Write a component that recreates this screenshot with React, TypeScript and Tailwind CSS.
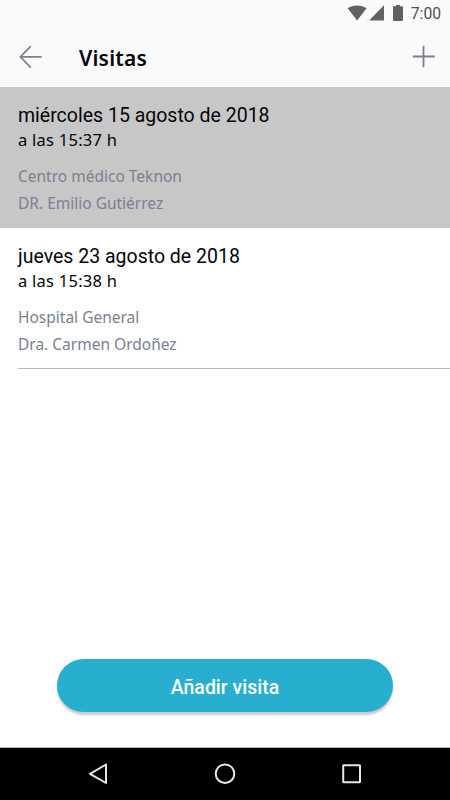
type Visit = {
  day: string;
  time: string;
  place: string;
  doctor: string;
};

function StatusBar() {
  return (
    <div className="flex h-[27px] items-start">
      <svg className="h-[27px] w-full" viewBox="0 0 450 27" fill="#616161">
        <path d="M347.6 8.3C353 4.5 361 4.5 366.6 8.3L357.1 20.5Z" />
        <path d="M384 5.2V20.6H369.2Z" />
        <path d="M396 5h4v1.2h2.4q.6 0 .6.7v13.2q0 .8-.8.8h-8.4q-.8 0-.8-.8V6.900q0-.7.6-.7H396Z" />
        <text x="410.800" y="19.300" fontSize="15.700" fontFamily="Roboto, sans-serif" fill="#505050">7:00</text>
      </svg>
    </div>
  );
}

function Header() {
  return (
    <header className="flex h-[60px] items-center bg-[#fafafa]">
      <svg className="ml-[19px] h-6 w-6" viewBox="0 0 24 24" fill="none" stroke="#7b8092" strokeWidth="1.700" strokeLinecap="round" strokeLinejoin="round">
        <path d="M22 11.900H1.300M11.400 1.600L1.300 11.900L11.400 22.200" />
      </svg>
      <h1 className="mt-[2px] ml-[36px] font-['Noto_Sans',sans-serif] text-[21px] leading-[30px] font-semibold tracking-[0.2px] text-[#05070c]">Visitas</h1>
      <svg className="mr-[14px] ml-auto h-6 w-6" viewBox="0 0 24 24" fill="none" stroke="#7b8092" strokeWidth="1.8">
        <path d="M.8 11.500H22.800M11.500 .7V22.300" />
      </svg>
    </header>
  );
}

function VisitText({ visit }: { visit: Visit }) {
  return (
    <>
      <p className="font-[Roboto,sans-serif] text-[19.500px] leading-[27px] text-[#030409]">{visit.day}</p>
      <p className="mt-[-2px] font-['Noto_Sans',sans-serif] text-[16.500px] leading-[25px] tracking-[0.25px] text-[#030409]">{visit.time}</p>
      <div className="mt-[11px] font-['Noto_Sans',sans-serif] text-[15.500px] leading-[27px] text-[#7b8092]">
        <p>{visit.place}</p>
        <p>{visit.doctor}</p>
      </div>
    </>
  );
}

export default function App() {
  return (
    <div className="flex h-[800px] w-[450px] flex-col overflow-hidden bg-white whitespace-nowrap">
      <div className="bg-[#fafafa]">
        <StatusBar />
        <Header />
      </div>
      <main className="flex flex-1 flex-col">
        <section className="h-[141px] bg-[#c7c7c7] pt-[15px] pl-[18px]">
          <VisitText visit={{ day: "miércoles 15 agosto de 2018", time: "a las 15:37 h", place: "Centro médico Teknon", doctor: "DR. Emilio Gutiérrez" }} />
        </section>
        <section className="ml-[18px] h-[141px] border-b border-[#b8b8b8] pt-[15px]">
          <VisitText visit={{ day: "jueves 23 agosto de 2018", time: "a las 15:38 h", place: "Hospital General", doctor: "Dra. Carmen Ordoñez" }} />
        </section>
        <button className="mt-auto mb-[35px] ml-[57px] h-[53px] w-[336px] rounded-full bg-[#28aecf] pt-[4px] font-[Roboto,sans-serif] text-[19.500px] font-medium text-white shadow-[0_3px_2px_rgba(0,0,0,0.2)]">
          Añadir visita
        </button>
      </main>
      <nav className="h-[53px] border-t border-[#b4b4b4] bg-black">
        <svg className="h-[52px] w-full" viewBox="0 0 450 52" fill="none" stroke="#e8e8e8" strokeWidth="2" strokeLinejoin="round">
          <path d="M106 16.500V35L90 25.800Z" />
          <circle cx="225" cy="25.700" r="9.300" />
          <rect x="343.200" y="17.200" width="16.800" height="17" rx=".5" />
        </svg>
      </nav>
    </div>
  );
}
